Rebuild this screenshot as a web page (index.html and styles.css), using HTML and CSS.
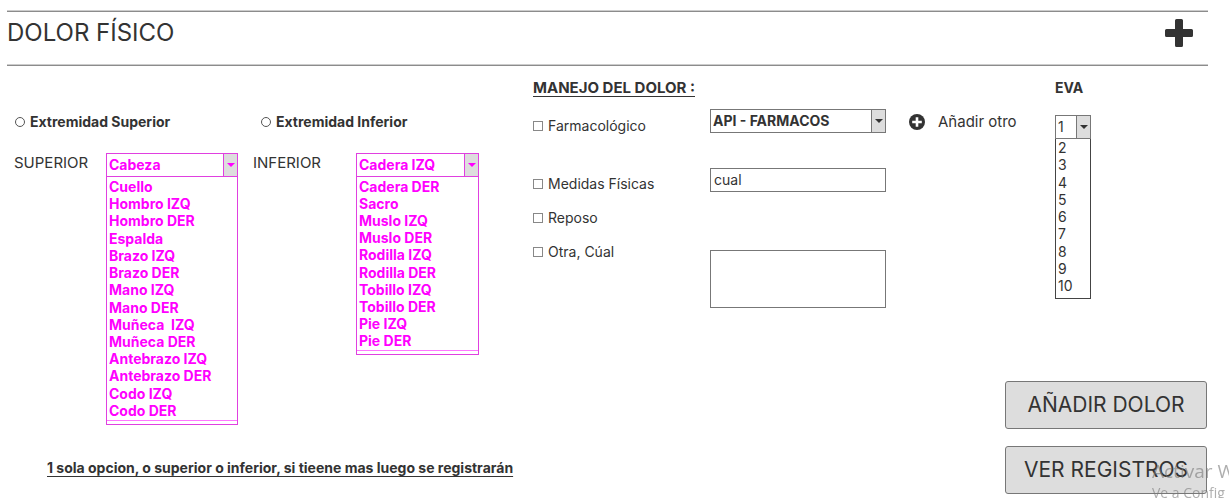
FILE: index.html
```html
<!DOCTYPE html>
<html lang="es">
<head>
<meta charset="utf-8">
<title>Dolor físico</title>
<link rel="stylesheet" href="styles.css">
</head>
<body>
<main class="page">
  <header class="header">
    <h1 class="title">DOLOR FÍSICO</h1>
    <button class="icon-button" type="button" aria-label="Agregar">
      <svg class="plus" viewBox="0 0 28 28" aria-hidden="true"><path d="M11.500 0h5a1.500 1.500 0 0 1 1.500 1.500V10h8.500a1.500 1.500 0 0 1 1.500 1.500v5a1.500 1.500 0 0 1-1.500 1.500H18v8.500a1.500 1.500 0 0 1-1.500 1.500h-5a1.500 1.500 0 0 1-1.500-1.500V18H1.500A1.500 1.500 0 0 1 0 16.500v-5A1.500 1.500 0 0 1 1.500 10H10V1.500A1.500 1.500 0 0 1 11.500 0z"/></svg>
    </button>
  </header>

  <div class="content">
    <section class="zones">
      <div class="zone-columns">
        <div class="zone">
          <label class="option option-strong"><input class="radio" type="radio" name="zona"><span>Extremidad Superior</span></label>
          <div class="zone-field">
            <label class="field-label" for="superior">SUPERIOR</label>
            <div class="combo combo-pink combo-superior">
              <div class="select-box">
                <select class="select" id="superior"><option>Cabeza</option></select>
                <span class="arrow"></span>
              </div>
              <ul class="list list-superior">
                <li>Cuello</li><li>Hombro IZQ</li><li>Hombro DER</li><li>Espalda</li><li>Brazo IZQ</li><li>Brazo DER</li><li>Mano IZQ</li><li>Mano DER</li><li>Muñeca&nbsp; IZQ</li><li>Muñeca DER</li><li>Antebrazo IZQ</li><li>Antebrazo DER</li><li>Codo IZQ</li><li>Codo DER</li>
              </ul>
            </div>
          </div>
        </div>
        <div class="zone">
          <label class="option option-strong option-inferior"><input class="radio" type="radio" name="zona"><span>Extremidad Inferior</span></label>
          <div class="zone-field">
            <label class="field-label" for="inferior">INFERIOR</label>
            <div class="combo combo-pink combo-inferior">
              <div class="select-box">
                <select class="select" id="inferior"><option>Cadera IZQ</option></select>
                <span class="arrow"></span>
              </div>
              <ul class="list list-inferior">
                <li>Cadera DER</li><li>Sacro</li><li>Muslo IZQ</li><li>Muslo DER</li><li>Rodilla IZQ</li><li>Rodilla DER</li><li>Tobillo IZQ</li><li>Tobillo DER</li><li>Pie IZQ</li><li>Pie DER</li>
              </ul>
            </div>
          </div>
        </div>
      </div>
      <p class="note">1 sola opcion, o superior o inferior, si tieene mas luego se registrarán</p>
    </section>

    <section class="treatment">
      <h2 class="heading heading-underlined">MANEJO DEL DOLOR :</h2>
      <div class="treatment-row row-drug">
        <label class="option"><input class="check" type="checkbox"><span>Farmacológico</span></label>
        <div class="select-box">
          <select class="select select-strong" aria-label="Fármaco"><option>API - FARMACOS</option></select>
          <span class="arrow"></span>
        </div>
        <button class="add-button" type="button">
          <svg class="add-icon" viewBox="0 0 16 16" aria-hidden="true"><circle cx="8" cy="8" r="8"/><path d="M6.700 3.200h2.600v3.500h3.500v2.600H9.300v3.500H6.700V9.300H3.200V6.700h3.500z" fill="#fff"/></svg>
          <span>Añadir otro</span>
        </button>
      </div>
      <div class="treatment-row row-physical">
        <label class="option"><input class="check" type="checkbox"><span>Medidas Físicas</span></label>
        <input class="text-input" type="text" value="cual" aria-label="Medida física">
      </div>
      <div class="treatment-row row-rest">
        <label class="option"><input class="check" type="checkbox"><span>Reposo</span></label>
      </div>
      <div class="treatment-row row-other">
        <label class="option"><input class="check" type="checkbox"><span>Otra, Cúal</span></label>
        <textarea class="text-area" aria-label="Otra"></textarea>
      </div>
    </section>

    <section class="side">
      <div class="eva">
        <label class="heading" for="eva">EVA</label>
        <div class="combo combo-eva">
          <div class="select-box">
            <select class="select" id="eva"><option>1</option></select>
            <span class="arrow"></span>
          </div>
          <ul class="list list-eva">
            <li>2</li><li>3</li><li>4</li><li>5</li><li>6</li><li>7</li><li>8</li><li>9</li><li>10</li>
          </ul>
        </div>
      </div>
      <div class="actions">
        <button class="action" type="button">AÑADIR DOLOR</button>
        <button class="action" type="button">VER REGISTROS</button>
      </div>
    </section>
  </div>
</main>
<div class="watermark"><p class="watermark-title">Activar W</p><p class="watermark-text">Ve a Config</p></div>
</body>
</html>
```
FILE: styles.css
```css
* {
  box-sizing: border-box;
}

body {
  margin: 0;
  overflow: hidden;
  background: #fff;
  color: #333;
  font: 14px/17px Inter, "Noto Sans", sans-serif;
}

h1, h2, p, ul {
  margin: 0;
  padding: 0;
}

ul {
  list-style: none;
}

button, input, select, textarea {
  margin: 0;
  color: inherit;
  font: inherit;
}

.page {
  padding: 11px 21px 0 7px;
}

.header {
  display: flex;
  align-items: flex-start;
  justify-content: space-between;
  padding: 7px 15px 18px 0;
  border-top: 1px solid #8c8c8c;
  border-bottom: 1px solid #8c8c8c;
  box-shadow: 0 -1px #ccc, inset 0 -1px #ccc;
}

.title {
  font-size: 24px;
  font-weight: 400;
  line-height: 28px;
}

.icon-button, .add-button {
  padding: 0;
  border: 0;
  background: none;
}

.plus {
  display: block;
  width: 28px;
  height: 28px;
  fill: #333;
}

.content {
  display: grid;
  grid-template-columns: minmax(0, 526fr) minmax(0, 472fr) minmax(0, 203fr);
}

.zones {
  padding-top: 47px;
}

.zone-columns {
  display: grid;
  grid-template-columns: minmax(0, 239fr) minmax(0, 287fr);
}

.option {
  display: flex;
  align-items: center;
  gap: 5px;
}

.zone .option {
  padding-left: 8px;
}

.zone .option-inferior {
  padding-left: 15px;
}

.option-strong {
  font-weight: 700;
}

.radio, .check {
  flex: none;
  width: 10px;
  height: 10px;
  border: 1px solid #888;
  background: #fff;
  appearance: none;
}

.radio {
  border-color: #555;
  border-radius: 50%;
}

.radio:checked, .check:checked {
  background: #333;
}

.zone-field {
  display: flex;
  align-items: flex-start;
  justify-content: space-between;
  padding: 23px 8px 0 7px;
}

.zone + .zone .zone-field {
  padding-right: 54px;
}

.field-label {
  padding-top: 1px;
  font-size: 15px;
}

.select-box {
  position: relative;
}

.select, .text-input, .text-area {
  display: block;
  width: 100%;
  height: 24px;
  padding: 0 3px 2px;
  border: 1px solid #777;
  border-radius: 0;
  background: #fff;
  appearance: none;
}

.select {
  padding-left: 2px;
}

.text-area {
  height: 58px;
  resize: none;
}

.select-strong {
  font-weight: 700;
}

.arrow {
  position: absolute;
  top: 1px;
  right: 1px;
  bottom: 1px;
  display: grid;
  place-items: center;
  width: 14px;
  border-left: 1px solid #777;
  background: #ddd;
  pointer-events: none;
}

.arrow::after {
  border: 4px solid transparent;
  border-top-color: currentColor;
  border-bottom: 0;
  content: "";
}

.list {
  display: flex;
  flex-direction: column;
  justify-content: space-between;
  padding: 1px 2px;
  border: 1px solid #444;
  border-top: 0;
}

.combo-pink {
  color: #f0f;
  font-weight: 700;
}

.combo-pink .select, .combo-pink .arrow, .combo-pink .list {
  border-color: #e040e0;
}

.combo-pink .list {
  position: relative;
  padding-bottom: 5px;
}

.combo-pink .list::after {
  position: absolute;
  right: 0;
  bottom: 3px;
  left: 0;
  border-top: 1px solid #f7f;
  content: "";
}

.combo-superior {
  width: 132px;
}

.combo-inferior {
  width: 123px;
}

.list-superior {
  min-height: 248px;
}

.list-inferior {
  min-height: 178px;
}

.note {
  padding: 34px 0 0 40px;
  font-weight: 700;
  text-decoration: underline;
  text-underline-offset: 3px;
  white-space: nowrap;
}

.heading {
  font-weight: 700;
}

.heading-underlined {
  font-size: 15px;
  line-height: 17px;
  text-decoration: underline;
  text-underline-offset: 3px;
}

.treatment {
  padding-top: 13px;
}

.treatment-row {
  display: grid;
  grid-template-columns: minmax(0, 177fr) minmax(0, 176fr) minmax(0, 119fr);
  align-items: start;
}

.treatment-row > .option {
  padding-top: 8px;
}

.row-drug {
  padding-top: 13px;
}

.row-physical {
  padding-top: 34px;
}

.row-physical > .option {
  padding-top: 7px;
}

.row-rest {
  padding-top: 10px;
}

.row-rest > .option {
  padding-top: 7px;
}

.row-other {
  padding-top: 17px;
}

.row-other > .option {
  padding-top: 0;
}

.row-other .text-area {
  margin-top: 7px;
}

.add-button {
  display: flex;
  align-items: center;
  gap: 13px;
  padding: 4px 0 0 23px;
  font-size: 15px;
  white-space: nowrap;
}

.add-icon {
  flex: none;
  width: 16px;
  height: 16px;
  fill: #333;
}

.side {
  padding-top: 13px;
}

.eva {
  display: flex;
  flex-direction: column;
  gap: 19px;
  padding-left: 50px;
}

.combo-eva {
  width: 36px;
}

.list-eva {
  min-height: 160px;
  padding-top: 0;
  padding-bottom: 4px;
}

.actions {
  display: flex;
  flex-direction: column;
  gap: 17px;
  padding: 82px 1px 0 0;
}

.action {
  padding: 9px 0;
  border: 1px solid #777;
  border-radius: 3px;
  background: #ddd;
  font-size: 21px;
  line-height: 28px;
  white-space: nowrap;
}

.watermark {
  position: fixed;
  top: 459px;
  right: 0;
  bottom: 0;
  width: 77px;
  overflow: hidden;
  color: rgba(120, 120, 120, 0.6);
  font-family: "Open Sans", "Noto Sans", sans-serif;
  white-space: nowrap;
  pointer-events: none;
}

.watermark-title {
  font-size: 19px;
  line-height: 24px;
}

.watermark-text {
  font-size: 14px;
  line-height: 20px;
}
```
